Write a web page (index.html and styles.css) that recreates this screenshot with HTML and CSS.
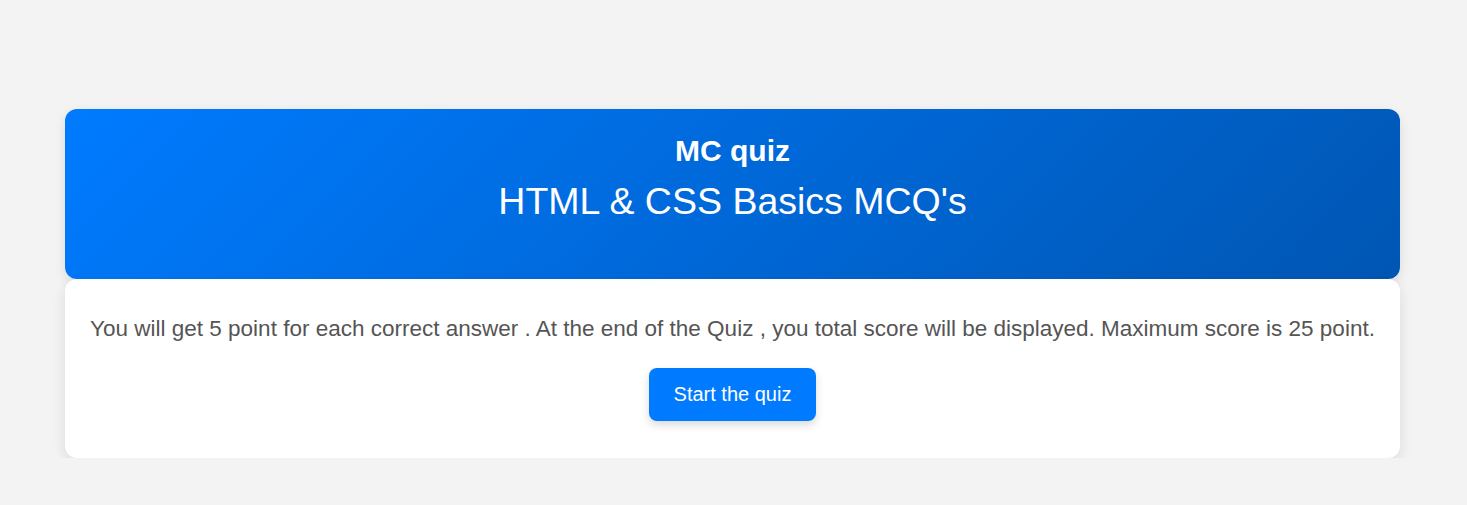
FILE: index.html
```html
<!DOCTYPE html>
<html>
<head>
<meta charset="utf-8">
<link rel="stylesheet" href="styles.css">
</head>
<body>
<main class="quiz">
  <header class="quiz-header">
    <h2 class="quiz-brand">MC quiz</h2>
    <h1 class="quiz-title">HTML &amp; CSS Basics MCQ's</h1>
  </header>
  <section class="quiz-body">
    <p class="quiz-info">You will get 5 point for each correct answer . At the end of the Quiz , you total score will be displayed. Maximum score is 25 point.</p>
    <button class="start-btn">Start the quiz</button>
  </section>
</main>
</body>
</html>
```
FILE: styles.css
```css
html, body {
  margin: 0;
  padding: 0;
}
body {
  background: #f3f3f3;
  font-family: "Liberation Sans", Arial, sans-serif;
  padding-top: 109px;
}
.quiz {
  width: 1335px;
  margin: 0 auto 0 65px;
}
.quiz-header {
  height: 170px;
  box-sizing: border-box;
  padding-top: 25px;
  border-radius: 12px;
  background: linear-gradient(135deg, #007bff, #0056b3);
  color: #fff;
  text-align: center;
  box-shadow: 0 4px 12px rgba(0,0,0,0.1);
}
.quiz-brand {
  margin: 0;
  font-size: 30px;
  font-weight: bold;
  line-height: 34px;
}
.quiz-title {
  margin: 11px 0 0;
  font-size: 37.5px;
  font-weight: normal;
  line-height: 44px;
}
.quiz-body {
  background: #fff;
  border-radius: 12px;
  height: 179px;
  box-sizing: border-box;
  padding-top: 35px;
  text-align: center;
  box-shadow: 0 4px 14px rgba(0,0,0,0.1);
}
.quiz-info {
  margin: 0 0 24px;
  font-size: 22.5px;
  line-height: 30px;
  color: #555;
}
.start-btn {
  width: 167px;
  height: 53px;
  border: none;
  border-radius: 8px;
  background: #007bff;
  color: #fff;
  font-family: "Liberation Sans", Arial, sans-serif;
  font-size: 20px;
  box-shadow: 0 4px 8px rgba(0,0,0,0.15);
  cursor: pointer;
}
```
